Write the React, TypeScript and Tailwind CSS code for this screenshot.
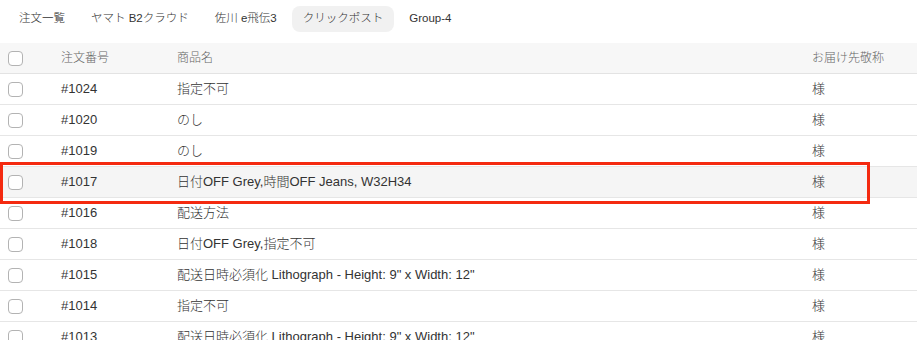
import React from "react";

const rows = [
  { id: "#1024", name: "指定不可" },
  { id: "#1020", name: "のし" },
  { id: "#1019", name: "のし" },
  { id: "#1017", name: "日付OFF Grey,時間OFF Jeans, W32H34", hl: true },
  { id: "#1016", name: "配送方法" },
  { id: "#1018", name: "日付OFF Grey,指定不可" },
  { id: "#1015", name: "配送日時必須化 Lithograph - Height: 9\" x Width: 12\"" },
  { id: "#1014", name: "指定不可" },
  { id: "#1013", name: "配送日時必須化 Lithograph - Height: 9\" x Width: 12\"" },
];

const tabs = ["注文一覧", "ヤマト B2クラウド", "佐川 e飛伝3", "クリックポスト", "Group-4"];

function Box() {
  return <div className="w-[15px] h-[15px] rounded-[4px] border border-[#b3b3b3] bg-white" />;
}

export default function App() {
  return (
    <div
      className="w-[917px] h-[340px] overflow-hidden bg-white text-[#333333] font-light"
      style={{ fontFamily: '"Liberation Sans", "Noto Sans CJK JP", sans-serif' }}
    >
      <div className="flex items-start gap-[4px] pl-[8px] pt-[6px] h-[43px]">
        {tabs.map((t, i) => (
          <div
            key={t}
            className={`h-[26px] px-[11px] flex items-center rounded-[8px] text-[11.5px] text-[#333333] ${
              i === 3 ? "bg-[#f1f1f1]" : ""
            }`}
          >
            {t}
          </div>
        ))}
      </div>
      <div className="relative">
        <div className="flex items-center h-[31px] bg-[#f7f7f7] border-b border-[#e3e3e3] text-[12px] text-[#666666]">
          <div className="w-[61px] pl-[8px] shrink-0"><Box /></div>
          <div className="w-[116px] shrink-0">注文番号</div>
          <div className="flex-1">商品名</div>
          <div className="w-[105px] shrink-0">お届け先敬称</div>
        </div>
        {rows.map((r) => (
          <div
            key={r.id}
            className={`flex items-center h-[31px] border-b border-[#e6e6e6] text-[13px] ${
              r.hl ? "bg-[#f5f5f5]" : "bg-white"
            }`}
          >
            <div className="w-[61px] pl-[8px] shrink-0"><Box /></div>
            <div className="w-[116px] shrink-0">{r.id}</div>
            <div className="flex-1 whitespace-nowrap">{r.name}</div>
            <div className="w-[105px] shrink-0">様</div>
          </div>
        ))}
        <div className="absolute left-0 top-[119px] w-[870px] h-[42px] border-[3px] border-[#f42a10] pointer-events-none" />
      </div>
    </div>
  );
}
